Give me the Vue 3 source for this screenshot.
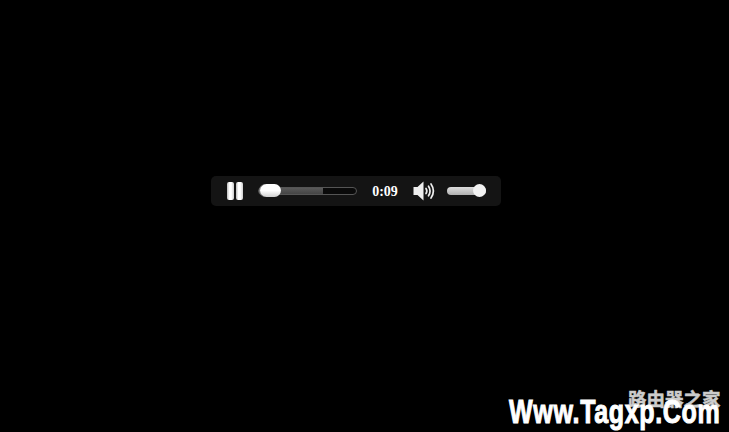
<script setup>
</script>

<template>
  <div class="page">
    <div class="player">
      <button class="pause" aria-label="Pause"><span></span><span></span></button>
      <div class="track">
        <div class="buffered"></div>
        <div class="thumb"></div>
      </div>
      <div class="time">0:09</div>
      <svg class="speaker" width="24" height="20" viewBox="0 0 24 20">
        <path d="M0.5 6H4.5L10.5 0.5V19.5L4.5 14H0.5Z" fill="#eee"/>
        <path d="M13 7.5Q14.7 10 13 12.5M15.5 5.2Q18.6 10 15.5 14.8M18 3Q22.8 10 18 17" fill="none" stroke="#eee" stroke-width="1.7" stroke-linecap="round"/>
      </svg>
      <div class="volume"><div class="knob"></div></div>
    </div>
    <div class="mark">
      <div class="cn">路由器之家</div>
      <div class="en">Www.Tagxp.Com</div>
    </div>
  </div>
</template>

<style scoped>
.page {
  position: relative;
  width: 729px;
  height: 432px;
  background: #000;
  overflow: hidden;
  display: flex;
  flex-direction: column;
  align-items: flex-start;
  padding: 176px 0 0 211px;
  box-sizing: border-box;
}
.player {
  width: 290px;
  height: 30px;
  background: #141414;
  border-radius: 5px;
  display: flex;
  align-items: center;
  padding-left: 16px;
  box-sizing: border-box;
}
.pause {
  display: flex;
  gap: 2px;
  padding: 0;
  border: 0;
  background: none;
  margin-top: -1px;
}
.pause span {
  width: 7px;
  height: 18px;
  border-radius: 2px;
  background: linear-gradient(90deg, #bbb, #fff 35%, #fff 60%, #ccc);
}
.track {
  position: relative;
  margin-left: 15px;
  width: 99px;
  height: 8px;
  border: 1px solid #555;
  border-radius: 5px;
  background: #0a0a0a;
  box-sizing: border-box;
}
.buffered {
  width: 64px;
  height: 100%;
  background: linear-gradient(#5a5a5a, #444);
  border-radius: 4px 0 0 4px;
}
.thumb {
  position: absolute;
  left: 1px;
  top: -4px;
  width: 21px;
  height: 13px;
  border-radius: 7px;
  background: linear-gradient(#fff 50%, #d0d0d0);
  box-shadow: -1px 0 0 #888;
}
.time {
  margin-left: 15px;
  width: 26px;
  color: #fff;
  font: bold 14px "Liberation Serif", serif;
  line-height: 16px;
  text-align: center;
  margin-top: 1px;
}
.speaker {
  margin-left: 15px;
}
.volume {
  position: relative;
  margin-left: 10px;
  width: 39px;
  height: 8px;
  border-radius: 4px;
  background: linear-gradient(#ddd, #b0b0b0);
}
.knob {
  position: absolute;
  right: 0;
  top: -3px;
  width: 13px;
  height: 13px;
  border-radius: 50%;
  background: #f2f2f2;
}
.mark {
  position: absolute;
  right: 0;
  bottom: 0;
  width: 229px;
  height: 50px;
}
.cn {
  position: absolute;
  left: 128px;
  top: 6px;
  color: #ccc;
  font: bold 18.5px "Noto Sans CJK SC", sans-serif;
  line-height: 20px;
  white-space: nowrap;
  -webkit-text-stroke: 0.5px #ccc;
}
.en {
  position: absolute;
  left: 9px;
  top: 13px;
  color: #fff;
  font: bold 33px "Liberation Sans", sans-serif;
  line-height: 34px;
  letter-spacing: 0.8px;
  white-space: nowrap;
  -webkit-text-stroke: 1px #fff;
  transform: scaleX(0.76);
  transform-origin: left;
}
</style>
